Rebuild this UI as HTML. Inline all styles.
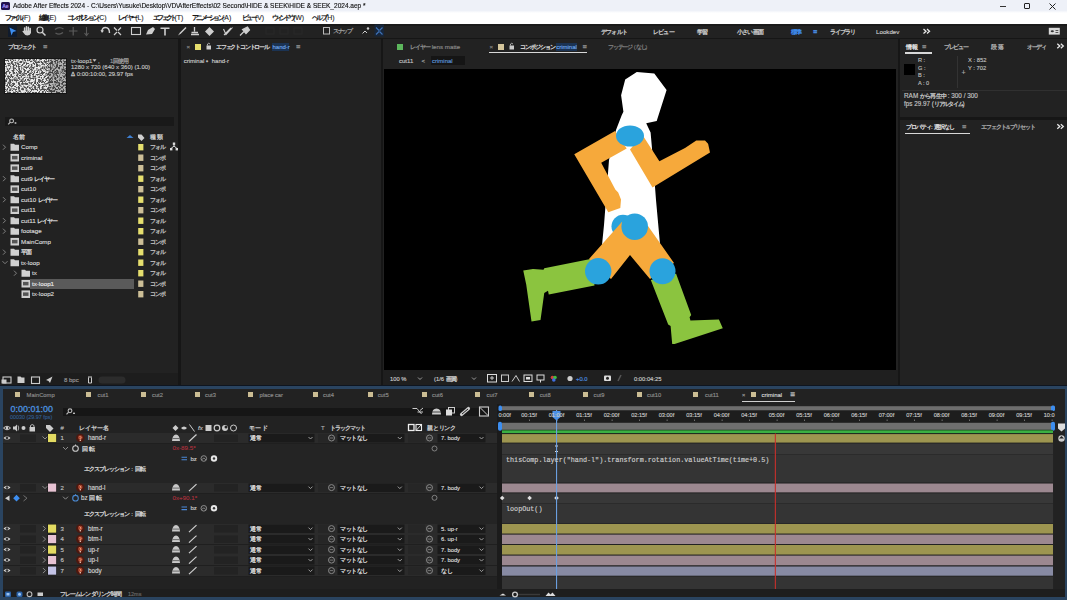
<!DOCTYPE html>
<html><head><meta charset="utf-8"><style>
*{margin:0;padding:0;box-sizing:border-box}
html,body{width:1067px;height:600px;overflow:hidden;background:#161616;font-family:"Liberation Sans",sans-serif;color:#bdbdbd}
.a{position:absolute}
.t{position:absolute;white-space:nowrap;line-height:10px;font-family:"Liberation Sans",sans-serif;-webkit-text-stroke:0.15px currentColor}
.t i{display:inline-block;font-style:normal;overflow:visible;text-align:left;-webkit-text-stroke:0.3px currentColor}
svg{position:absolute;overflow:visible}
</style></head><body>
<div class="a" style="left:0px;top:0px;width:1067px;height:24px;background:#ffffff;"></div>
<div class="a" style="left:0;top:0;width:1067px;height:13px;background:linear-gradient(#eef1f8 0,#eef1f8 10.5px,#ffffff 13px)"></div>
<div class="a" style="left:1px;top:2px;width:9px;height:8px;background:#1e0f4e;border-radius:1.5px"></div>
<div class="t" style="left:2.2px;top:1px;font-size:5px;color:#a997ff;font-weight:bold;line-height:10px">Ae</div>
<div class="t" style="left:13px;top:1px;font-size:7.6px;color:#111;line-height:10px;-webkit-text-stroke:0.15px #111;transform:scaleX(0.86);transform-origin:left">Adobe After Effects 2024 - C:\Users\Yusuke\Desktop\VD\AfterEffects\02 Second\HIDE &amp; SEEK\HIDE &amp; SEEK_2024.aep *</div>
<div class="a" style="left:1000px;top:6px;width:6px;height:0.8px;background:#333;"></div>
<div class="a" style="left:1024px;top:3px;width:6px;height:6px;border:1.2px solid #222;border-radius:1px"></div>
<svg style="left:1049px;top:3px" width="7" height="7"><path d="M0.5 0.5L6.5 6.5M6.5 0.5L0.5 6.5" stroke="#222" stroke-width="1"/></svg>
<div class="t" style="left:4.5px;top:13.3px;font-size:6.9px;color:#1a1a1a;-webkit-text-stroke:0.1px #222"><i style="width:4.3px">フ</i><i style="width:4.3px">ァ</i><i style="width:4.3px">イ</i><i style="width:4.3px">ル</i>(F)</div>
<div class="t" style="left:38.5px;top:13.3px;font-size:6.9px;color:#1a1a1a;-webkit-text-stroke:0.1px #222"><i style="width:4.3px">編</i><i style="width:4.3px">集</i>(E)</div>
<div class="t" style="left:67px;top:13.3px;font-size:6.9px;color:#1a1a1a;-webkit-text-stroke:0.1px #222"><i style="width:4.3px">コ</i><i style="width:4.3px">ン</i><i style="width:4.3px">ポ</i><i style="width:4.3px">ジ</i><i style="width:4.3px">シ</i><i style="width:4.3px">ョ</i><i style="width:4.3px">ン</i>(C)</div>
<div class="t" style="left:118px;top:13.3px;font-size:6.9px;color:#1a1a1a;-webkit-text-stroke:0.1px #222"><i style="width:4.3px">レ</i><i style="width:4.3px">イ</i><i style="width:4.3px">ヤ</i><i style="width:4.3px">ー</i>(L)</div>
<div class="t" style="left:153px;top:13.3px;font-size:6.9px;color:#1a1a1a;-webkit-text-stroke:0.1px #222"><i style="width:4.3px">エ</i><i style="width:4.3px">フ</i><i style="width:4.3px">ェ</i><i style="width:4.3px">ク</i><i style="width:4.3px">ト</i>(T)</div>
<div class="t" style="left:192px;top:13.3px;font-size:6.9px;color:#1a1a1a;-webkit-text-stroke:0.1px #222"><i style="width:4.3px">ア</i><i style="width:4.3px">ニ</i><i style="width:4.3px">メ</i><i style="width:4.3px">ー</i><i style="width:4.3px">シ</i><i style="width:4.3px">ョ</i><i style="width:4.3px">ン</i>(A)</div>
<div class="t" style="left:242px;top:13.3px;font-size:6.9px;color:#1a1a1a;-webkit-text-stroke:0.1px #222"><i style="width:4.3px">ビ</i><i style="width:4.3px">ュ</i><i style="width:4.3px">ー</i>(V)</div>
<div class="t" style="left:271.5px;top:13.3px;font-size:6.9px;color:#1a1a1a;-webkit-text-stroke:0.1px #222"><i style="width:4.3px">ウ</i><i style="width:4.3px">ィ</i><i style="width:4.3px">ン</i><i style="width:4.3px">ド</i><i style="width:4.3px">ウ</i>(W)</div>
<div class="t" style="left:312px;top:13.3px;font-size:6.9px;color:#1a1a1a;-webkit-text-stroke:0.1px #222"><i style="width:4.3px">ヘ</i><i style="width:4.3px">ル</i><i style="width:4.3px">プ</i>(H)</div>
<div class="a" style="left:0px;top:24px;width:1067px;height:13.5px;background:#222222;"></div>
<div class="a" style="left:0px;top:24px;width:1067px;height:1.5px;background:#1a1a1a;"></div>
<div class="a" style="left:7.5px;top:25px;width:9.5px;height:12px;background:#101b2c;"></div>
<svg style="left:0;top:0" width="1067" height="40"><path d="M9.5 27.5L16.5 31L13 32L11.5 35.5Z" fill="#3d8ef0"/><path d="M24.6 28V31.5M26.5 26.8V31M28.4 27.2V31M30.2 28.4V31.8" stroke="#cfcfcf" stroke-width="1.5" stroke-linecap="round"/><path d="M23.8 30.5H31V33Q30 35.5 27.2 35.5Q25 35.5 24 33.5L22.3 31.3Q22.8 30.3 24 31Z" fill="#cfcfcf"/><circle cx="40" cy="30" r="3" fill="none" stroke="#cfcfcf" stroke-width="1.2"/><path d="M42.2 32.2L45.5 35.5" stroke="#cfcfcf" stroke-width="1.5"/><path d="M55 29.5Q59 26 63.5 29M55.5 33Q59.5 35.5 63 32.5" stroke="#5a5a5a" stroke-width="1.3" fill="none"/><path d="M69 31H77.5M73.2 27V35.5" stroke="#5a5a5a" stroke-width="1.2"/><path d="M86.5 27V34.5M84.5 33L86.5 35.5L88.5 33" stroke="#5a5a5a" stroke-width="1.1" fill="none"/><path d="M102 31.5Q102 27.5 105.5 27.5Q109.5 27.5 109.5 33" stroke="#cfcfcf" stroke-width="1.4" fill="none"/><path d="M100.5 30L102 33L104 30.5Z" fill="#cfcfcf"/><path d="M114 27.5L117 30.5M121 27.5L118 30.5M114 35L117 32M121 35L118 32" stroke="#cfcfcf" stroke-width="1.2"/><rect x="131.5" y="27.5" width="9" height="7" fill="none" stroke="#cfcfcf" stroke-width="1.1"/><path d="M146 34.5L148 30L153 27L155 29L152 34Z" fill="#cfcfcf"/><path d="M160.5 27.5H169.5V29H165.8V35.5H164.2V29H160.5Z" fill="#cfcfcf"/><path d="M178 35.5L180 32.5L185.5 27L186.5 28L181 33.5Z" fill="#cfcfcf"/><path d="M194.5 27V31.5M191.5 32.5H198M191 34.5H199" stroke="#cfcfcf" stroke-width="1.3"/><path d="M205 31.5L209.5 27L214 31.5L209.5 36Z" fill="#cfcfcf"/><path d="M223.5 29L226 34.5L232.5 27.5M224 35L231 28" stroke="#cfcfcf" stroke-width="1.1" fill="none"/><path d="M240 35.5L244 31.5M242.5 29.5L247.5 27L249.5 30L246 33.5Z" stroke="#cfcfcf" stroke-width="1.2" fill="#cfcfcf"/><rect x="266" y="28" width="8" height="6" fill="none" stroke="#282828"/><rect x="280" y="28" width="8" height="6" fill="none" stroke="#282828"/><rect x="294" y="28" width="8" height="6" fill="none" stroke="#282828"/><rect x="323.5" y="27.5" width="6" height="6.5" fill="none" stroke="#bbb" stroke-width="1"/><circle cx="368" cy="28.5" r="1.2" fill="#cfcfcf"/><path d="M362.5 33.5L365 31L367 33" stroke="#cfcfcf" stroke-width="1" fill="none"/><rect x="374.5" y="24.5" width="9.5" height="12" fill="#17263b"/><path d="M376 27.5L379 30.5M382.5 27.5L379.5 30.5M376 34.5L379 31.5M382.5 34.5L379.5 31.5" stroke="#3f73b8" stroke-width="1.1"/></svg>
<div class="t" style="left:333px;top:26.0px;font-size:6px;color:#9a9a9a;"><i style="width:4.6px">ス</i><i style="width:4.6px">ナ</i><i style="width:4.6px">ッ</i><i style="width:4.6px">プ</i></div>
<div class="t" style="left:601px;top:26.5px;font-size:6.2px;color:#c8c8c8;"><i style="width:5.2px">デ</i><i style="width:5.2px">フ</i><i style="width:5.2px">ォ</i><i style="width:5.2px">ル</i><i style="width:5.2px">ト</i></div>
<div class="t" style="left:653px;top:26.5px;font-size:6.2px;color:#c8c8c8;"><i style="width:5.2px">レ</i><i style="width:5.2px">ビ</i><i style="width:5.2px">ュ</i><i style="width:5.2px">ー</i></div>
<div class="t" style="left:697px;top:26.5px;font-size:6.2px;color:#c8c8c8;"><i style="width:5.2px">学</i><i style="width:5.2px">習</i></div>
<div class="t" style="left:737px;top:26.5px;font-size:6.2px;color:#c8c8c8;"><i style="width:5.2px">小</i><i style="width:5.2px">さ</i><i style="width:5.2px">い</i><i style="width:5.2px">画</i><i style="width:5.2px">面</i></div>
<div class="t" style="left:791px;top:26.5px;font-size:6.2px;color:#3f8ef2;"><i style="width:5.2px">標</i><i style="width:5.2px">準</i></div>
<div class="t" style="left:829.5px;top:26.5px;font-size:6.2px;color:#c8c8c8;"><i style="width:5.2px">ラ</i><i style="width:5.2px">イ</i><i style="width:5.2px">ブ</i><i style="width:5.2px">ラ</i><i style="width:5.2px">リ</i></div>
<div class="t" style="left:876px;top:26.5px;font-size:6.2px;color:#c8c8c8;">Lookdev</div>
<div class="t" style="left:813px;top:26.5px;font-size:7px;color:#4b8fe6;"><i style="width:4.760000000000001px">≡</i></div>
<svg style="left:0;top:0" width="1067" height="140"><rect x="1048.8" y="27.8" width="11" height="6.8" fill="#d8d8d8"/><ellipse cx="1052.3" cy="31.2" rx="1.6" ry="1" fill="#333"/><rect x="1055.5" y="30" width="2.8" height="0.9" fill="#444"/><rect x="1055.5" y="32" width="2.8" height="0.9" fill="#444"/><path d="M923.5 29L926 31.2L923.5 33.4M927 29L929.5 31.2L927 33.4" stroke="#e8e8e8" stroke-width="1.3" fill="none"/></svg>
<div class="a" style="left:0px;top:39px;width:178px;height:346px;background:#222222;"></div>
<div class="a" style="left:181px;top:39px;width:200px;height:346px;background:#222222;"></div>
<div class="a" style="left:383px;top:39px;width:515px;height:346px;background:#222222;"></div>
<div class="a" style="left:900px;top:39px;width:167px;height:78px;background:#222222;"></div>
<div class="a" style="left:900px;top:120px;width:167px;height:265px;background:#222222;"></div>
<div class="t" style="left:8px;top:41.5px;font-size:6.4px;color:#c9c9c9;"><i style="width:4.7px">プ</i><i style="width:4.7px">ロ</i><i style="width:4.7px">ジ</i><i style="width:4.7px">ェ</i><i style="width:4.7px">ク</i><i style="width:4.7px">ト</i></div>
<div class="t" style="left:43px;top:41.5px;font-size:7px;color:#8a8a8a;"><i style="width:4.760000000000001px">≡</i></div>
<svg style="left:4px;top:57.5px" width="63" height="36"><defs><filter id="nz" x="0" y="0" width="100%" height="100%"><feTurbulence type="fractalNoise" baseFrequency="0.55" numOctaves="3" seed="7"/><feColorMatrix type="matrix" values="0 0 0 0 0.08  0 0 0 0 0.08  0 0 0 0 0.08  3.6 3.6 3.6 0 -4.95"/><feComposite in2="SourceGraphic" operator="in"/></filter></defs><rect width="63" height="36" fill="#eaeaea"/><rect width="63" height="36" fill="#3a3a3a" filter="url(#nz)"/><rect x="44" y="0" width="19" height="36" fill="rgba(20,20,20,0.25)"/><rect x="0.5" y="0.5" width="62" height="35" fill="none" stroke="#151515" stroke-width="1"/></svg>
<div class="t" style="left:71px;top:55.5px;font-size:6px;color:#c4c4c4;">tx-loop1</div>
<div class="t" style="left:98px;top:55.5px;font-size:6px;color:#c4c4c4;">,</div>
<div class="t" style="left:110px;top:55.5px;font-size:6px;color:#9a9a9a;">1<i style="width:4.6px">回</i><i style="width:4.6px">使</i><i style="width:4.6px">用</i></div>
<svg style="left:0;top:0" width="120" height="70"><path d="M92.5 59.3H96.5L94.5 61.8Z" fill="#c4c4c4"/></svg>
<div class="t" style="left:71px;top:62.2px;font-size:6px;color:#c4c4c4;">1280 x 720  (640 x 360) (1.00)</div>
<div class="t" style="left:71px;top:68.8px;font-size:6px;color:#c4c4c4;"><i style="width:4.08px">Δ</i> 0:00:10:00, 29.97 fps</div>
<div class="a" style="left:5px;top:116.7px;width:169px;height:9.8px;background:#191919;"></div>
<svg style="left:0;top:0" width="180" height="300"><circle cx="11.6" cy="120.9" r="1.9" fill="none" stroke="#bbb" stroke-width="1.1"/><path d="M10.2 122.3L8.2 124.3" stroke="#bbb" stroke-width="1.2"/><ellipse cx="15.5" cy="123" rx="1.1" ry="0.8" fill="#ddd"/><path d="M126.5 138L130 135L133.5 138Z" fill="#3f7fd0"/><path d="M138 134.5L141.5 134.5L144.5 138L141.5 141L138 137.5Z" fill="#cfcfcf"/></svg>
<div class="t" style="left:13px;top:131.5px;font-size:6.4px;color:#c8c8c8;"><i style="width:6px">名</i><i style="width:6px">前</i></div>
<div class="t" style="left:150px;top:131.5px;font-size:6.4px;color:#c8c8c8;"><i style="width:7px">種</i><i style="width:7px">類</i></div>
<div class="t" style="left:21px;top:142.4px;font-size:6.2px;color:#d8d8d8;">Comp</div>
<div class="t" style="left:150px;top:142.4px;font-size:6.2px;color:#bdbdbd;"><i style="width:5.2px">フ</i><i style="width:5.2px">ォ</i><i style="width:5.2px">ル</i></div>
<div class="t" style="left:21px;top:152.9px;font-size:6.2px;color:#d8d8d8;">criminal</div>
<div class="t" style="left:150px;top:152.9px;font-size:6.2px;color:#bdbdbd;"><i style="width:5.2px">コ</i><i style="width:5.2px">ン</i><i style="width:5.2px">ポ</i></div>
<div class="t" style="left:21px;top:163.4px;font-size:6.2px;color:#d8d8d8;">cut9</div>
<div class="t" style="left:150px;top:163.4px;font-size:6.2px;color:#bdbdbd;"><i style="width:5.2px">コ</i><i style="width:5.2px">ン</i><i style="width:5.2px">ポ</i></div>
<div class="t" style="left:21px;top:173.9px;font-size:6.2px;color:#d8d8d8;">cut9 <i style="width:4.8px">レ</i><i style="width:4.8px">イ</i><i style="width:4.8px">ヤ</i><i style="width:4.8px">ー</i></div>
<div class="t" style="left:150px;top:173.9px;font-size:6.2px;color:#bdbdbd;"><i style="width:5.2px">フ</i><i style="width:5.2px">ォ</i><i style="width:5.2px">ル</i></div>
<div class="t" style="left:21px;top:184.4px;font-size:6.2px;color:#d8d8d8;">cut10</div>
<div class="t" style="left:150px;top:184.4px;font-size:6.2px;color:#bdbdbd;"><i style="width:5.2px">コ</i><i style="width:5.2px">ン</i><i style="width:5.2px">ポ</i></div>
<div class="t" style="left:21px;top:194.9px;font-size:6.2px;color:#d8d8d8;">cut10 <i style="width:4.8px">レ</i><i style="width:4.8px">イ</i><i style="width:4.8px">ヤ</i><i style="width:4.8px">ー</i></div>
<div class="t" style="left:150px;top:194.9px;font-size:6.2px;color:#bdbdbd;"><i style="width:5.2px">フ</i><i style="width:5.2px">ォ</i><i style="width:5.2px">ル</i></div>
<div class="t" style="left:21px;top:205.4px;font-size:6.2px;color:#d8d8d8;">cut11</div>
<div class="t" style="left:150px;top:205.4px;font-size:6.2px;color:#bdbdbd;"><i style="width:5.2px">コ</i><i style="width:5.2px">ン</i><i style="width:5.2px">ポ</i></div>
<div class="t" style="left:21px;top:215.9px;font-size:6.2px;color:#d8d8d8;">cut11 <i style="width:4.8px">レ</i><i style="width:4.8px">イ</i><i style="width:4.8px">ヤ</i><i style="width:4.8px">ー</i></div>
<div class="t" style="left:150px;top:215.9px;font-size:6.2px;color:#bdbdbd;"><i style="width:5.2px">フ</i><i style="width:5.2px">ォ</i><i style="width:5.2px">ル</i></div>
<div class="t" style="left:21px;top:226.4px;font-size:6.2px;color:#d8d8d8;">footage</div>
<div class="t" style="left:150px;top:226.4px;font-size:6.2px;color:#bdbdbd;"><i style="width:5.2px">フ</i><i style="width:5.2px">ォ</i><i style="width:5.2px">ル</i></div>
<div class="t" style="left:21px;top:236.9px;font-size:6.2px;color:#d8d8d8;">MainComp</div>
<div class="t" style="left:150px;top:236.9px;font-size:6.2px;color:#bdbdbd;"><i style="width:5.2px">コ</i><i style="width:5.2px">ン</i><i style="width:5.2px">ポ</i></div>
<div class="t" style="left:21px;top:247.4px;font-size:6.2px;color:#d8d8d8;"><i style="width:4.8px">平</i><i style="width:4.8px">面</i></div>
<div class="t" style="left:150px;top:247.4px;font-size:6.2px;color:#bdbdbd;"><i style="width:5.2px">フ</i><i style="width:5.2px">ォ</i><i style="width:5.2px">ル</i></div>
<div class="t" style="left:21px;top:257.9px;font-size:6.2px;color:#d8d8d8;">tx-loop</div>
<div class="t" style="left:150px;top:257.9px;font-size:6.2px;color:#bdbdbd;"><i style="width:5.2px">フ</i><i style="width:5.2px">ォ</i><i style="width:5.2px">ル</i></div>
<div class="t" style="left:32px;top:268.4px;font-size:6.2px;color:#d8d8d8;">tx</div>
<div class="t" style="left:150px;top:268.4px;font-size:6.2px;color:#bdbdbd;"><i style="width:5.2px">フ</i><i style="width:5.2px">ォ</i><i style="width:5.2px">ル</i></div>
<div class="a" style="left:30px;top:278.5px;width:104px;height:10px;background:#5a5a5a;"></div>
<div class="t" style="left:32px;top:278.9px;font-size:6.2px;color:#e8e8e8;">tx-loop1</div>
<div class="t" style="left:150px;top:278.9px;font-size:6.2px;color:#bdbdbd;"><i style="width:5.2px">コ</i><i style="width:5.2px">ン</i><i style="width:5.2px">ポ</i></div>
<div class="t" style="left:32px;top:289.4px;font-size:6.2px;color:#d8d8d8;">tx-loop2</div>
<div class="t" style="left:150px;top:289.4px;font-size:6.2px;color:#bdbdbd;"><i style="width:5.2px">コ</i><i style="width:5.2px">ン</i><i style="width:5.2px">ポ</i></div>
<svg style="left:0;top:0" width="180" height="310"><path d="M3 144.7L5.5 147.2L3 149.7" stroke="#8a8a8a" stroke-width="0.9" fill="none"/><path d="M10.5 143.7H14L15 144.7H19V150.7H10.5Z" fill="#d0d0d0"/><rect x="138.2" y="144.0" width="5.2" height="6.4" fill="#e6df6e"/><rect x="10.5" y="153.89999999999998" width="8.5" height="7.6" fill="#cfcfcf"/><rect x="12" y="155.89999999999998" width="5.5" height="3.5" fill="#555"/><rect x="138.2" y="154.5" width="5.2" height="6.4" fill="#cdbf97"/><rect x="10.5" y="164.39999999999998" width="8.5" height="7.6" fill="#cfcfcf"/><rect x="12" y="166.39999999999998" width="5.5" height="3.5" fill="#555"/><rect x="138.2" y="165.0" width="5.2" height="6.4" fill="#cdbf97"/><path d="M3 176.2L5.5 178.7L3 181.2" stroke="#8a8a8a" stroke-width="0.9" fill="none"/><path d="M10.5 175.2H14L15 176.2H19V182.2H10.5Z" fill="#d0d0d0"/><rect x="138.2" y="175.5" width="5.2" height="6.4" fill="#e6df6e"/><rect x="10.5" y="185.39999999999998" width="8.5" height="7.6" fill="#cfcfcf"/><rect x="12" y="187.39999999999998" width="5.5" height="3.5" fill="#555"/><rect x="138.2" y="186.0" width="5.2" height="6.4" fill="#cdbf97"/><path d="M3 197.2L5.5 199.7L3 202.2" stroke="#8a8a8a" stroke-width="0.9" fill="none"/><path d="M10.5 196.2H14L15 197.2H19V203.2H10.5Z" fill="#d0d0d0"/><rect x="138.2" y="196.5" width="5.2" height="6.4" fill="#e6df6e"/><rect x="10.5" y="206.39999999999998" width="8.5" height="7.6" fill="#cfcfcf"/><rect x="12" y="208.39999999999998" width="5.5" height="3.5" fill="#555"/><rect x="138.2" y="207.0" width="5.2" height="6.4" fill="#cdbf97"/><path d="M3 218.2L5.5 220.7L3 223.2" stroke="#8a8a8a" stroke-width="0.9" fill="none"/><path d="M10.5 217.2H14L15 218.2H19V224.2H10.5Z" fill="#d0d0d0"/><rect x="138.2" y="217.5" width="5.2" height="6.4" fill="#e6df6e"/><path d="M3 228.7L5.5 231.2L3 233.7" stroke="#8a8a8a" stroke-width="0.9" fill="none"/><path d="M10.5 227.7H14L15 228.7H19V234.7H10.5Z" fill="#d0d0d0"/><rect x="138.2" y="228.0" width="5.2" height="6.4" fill="#e6df6e"/><rect x="10.5" y="237.89999999999998" width="8.5" height="7.6" fill="#cfcfcf"/><rect x="12" y="239.89999999999998" width="5.5" height="3.5" fill="#555"/><rect x="138.2" y="238.5" width="5.2" height="6.4" fill="#cdbf97"/><path d="M3 249.7L5.5 252.2L3 254.7" stroke="#8a8a8a" stroke-width="0.9" fill="none"/><path d="M10.5 248.7H14L15 249.7H19V255.7H10.5Z" fill="#d0d0d0"/><rect x="138.2" y="249.0" width="5.2" height="6.4" fill="#e6df6e"/><path d="M2.5 261.2L5 263.7L7.5 261.2" stroke="#8a8a8a" stroke-width="0.9" fill="none"/><path d="M10.5 259.2H14L15 260.2H19V266.2H10.5Z" fill="#d0d0d0"/><rect x="138.2" y="259.5" width="5.2" height="6.4" fill="#e6df6e"/><path d="M14 270.7L16.5 273.2L14 275.7" stroke="#8a8a8a" stroke-width="0.9" fill="none"/><path d="M21.5 269.7H25L26 270.7H30V276.7H21.5Z" fill="#d0d0d0"/><rect x="138.2" y="270.0" width="5.2" height="6.4" fill="#e6df6e"/><rect x="21.5" y="279.9" width="8.5" height="7.6" fill="#cfcfcf"/><rect x="23" y="281.9" width="5.5" height="3.5" fill="#555"/><rect x="138.2" y="280.5" width="5.2" height="6.4" fill="#cdbf97"/><rect x="21.5" y="290.4" width="8.5" height="7.6" fill="#cfcfcf"/><rect x="23" y="292.4" width="5.5" height="3.5" fill="#555"/><rect x="138.2" y="291.0" width="5.2" height="6.4" fill="#cdbf97"/><path d="M174 143.5V146M171 148.5L174 146L177 148.5" stroke="#ddd" stroke-width="1" fill="none"/><rect x="172.8" y="142.5" width="2.4" height="2.4" fill="#ddd"/><rect x="170" y="148" width="2.4" height="2.4" fill="#ddd"/><rect x="175.6" y="148" width="2.4" height="2.4" fill="#ddd"/></svg>
<div class="a" style="left:0px;top:373px;width:178px;height:12px;background:#1d1d1d;"></div>
<svg style="left:0;top:0" width="180" height="390"><rect x="3" y="377" width="8" height="6" fill="none" stroke="#ccc" stroke-width="1.1"/><rect x="1.5" y="379.5" width="5" height="4" fill="#ccc"/><path d="M17.5 376.5H20.5L21.5 377.5H24.5V383H17.5Z" fill="#ccc"/><rect x="31.5" y="377" width="8" height="6.5" fill="none" stroke="#ccc" stroke-width="1.1"/><path d="M46 380L52.5 376.5L50 383L48.5 381Z" fill="#ccc"/><path d="M88 377H92M88.5 377.5V383H91.5V377.5" stroke="#ccc" stroke-width="1" fill="none"/><rect x="98.5" y="376.5" width="27" height="7" rx="3.5" fill="#2c2c2c"/></svg>
<div class="t" style="left:64px;top:375.0px;font-size:6px;color:#9a9a9a;">8 bpc</div>
<div class="t" style="left:186.5px;top:41.8px;font-size:6px;color:#777;"><i style="width:4.08px">×</i></div>
<div class="a" style="left:194.6px;top:43.5px;width:6px;height:6px;background:#e6de6c;"></div>
<svg style="left:0;top:0" width="600" height="70"><rect x="206.5" y="45.5" width="4.5" height="4" fill="#ccc"/><path d="M207.5 45.5V44Q208.7 42.5 210 44" stroke="#ccc" stroke-width="0.8" fill="none"/><rect x="509.5" y="45.5" width="4.5" height="4" fill="#ccc"/><path d="M510.5 45.5V44Q511.7 42.5 513 44" stroke="#ccc" stroke-width="0.8" fill="none"/></svg>
<div class="t" style="left:216px;top:41.8px;font-size:6.2px;color:#d0d0d0;"><i style="width:4.8px">エ</i><i style="width:4.8px">フ</i><i style="width:4.8px">ェ</i><i style="width:4.8px">ク</i><i style="width:4.8px">ト</i><i style="width:4.8px">コ</i><i style="width:4.8px">ン</i><i style="width:4.8px">ト</i><i style="width:4.8px">ロ</i><i style="width:4.8px">ー</i><i style="width:4.8px">ル</i></div>
<div class="a" style="left:271.5px;top:43px;width:17.5px;height:7.5px;background:#1b3353;"></div>
<div class="t" style="left:272.5px;top:41.8px;font-size:6px;color:#6fa6e8;">hand-r</div>
<div class="t" style="left:296px;top:41.8px;font-size:7px;color:#8a8a8a;"><i style="width:4.760000000000001px">≡</i></div>
<div class="t" style="left:183.7px;top:55.6px;font-size:6px;color:#c8c8c8;">criminal <i style="width:4.08px">•</i> hand-r</div>
<div class="a" style="left:396.6px;top:43.5px;width:6.5px;height:6.2px;background:#5cb65c;"></div>
<div class="t" style="left:410px;top:41.8px;font-size:6.2px;color:#8c8c8c;"><i style="width:5px">レ</i><i style="width:5px">イ</i><i style="width:5px">ヤ</i><i style="width:5px">ー</i> lens matte</div>
<div class="t" style="left:489.5px;top:41.8px;font-size:6px;color:#777;"><i style="width:4.08px">×</i></div>
<div class="a" style="left:497.5px;top:43.5px;width:6.3px;height:6.2px;background:#d4c59b;"></div>
<div class="t" style="left:519.5px;top:41.8px;font-size:6.2px;color:#d8d8d8;"><i style="width:5.1px">コ</i><i style="width:5.1px">ン</i><i style="width:5.1px">ポ</i><i style="width:5.1px">ジ</i><i style="width:5.1px">シ</i><i style="width:5.1px">ョ</i><i style="width:5.1px">ン</i></div>
<div class="a" style="left:555.5px;top:43px;width:21.5px;height:7.5px;background:#1b3353;"></div>
<div class="t" style="left:556.2px;top:41.8px;font-size:6px;color:#6fa6e8;">criminal</div>
<div class="t" style="left:582.5px;top:41.8px;font-size:7px;color:#8a8a8a;"><i style="width:4.760000000000001px">≡</i></div>
<div class="a" style="left:488.7px;top:52px;width:98.5px;height:1.3px;background:#d8d8d8;"></div>
<div class="t" style="left:608px;top:41.8px;font-size:6.2px;color:#7d7d7d;"><i style="width:4.8px">フ</i><i style="width:4.8px">ッ</i><i style="width:4.8px">テ</i><i style="width:4.8px">ー</i><i style="width:4.8px">ジ</i> (<i style="width:4.8px">な</i><i style="width:4.8px">し</i>)</div>
<div class="t" style="left:399px;top:55.5px;font-size:6px;color:#c0c0c0;">cut11</div>
<div class="t" style="left:421.5px;top:55.5px;font-size:6px;color:#aaa;">&lt;</div>
<div class="a" style="left:430.5px;top:56.3px;width:34.5px;height:8.5px;background:#151515;"></div>
<div class="t" style="left:432px;top:55.5px;font-size:6px;color:#5d95d8;">criminal</div>
<div class="a" style="left:384px;top:69px;width:512px;height:301px;background:#000000;"></div>
<div class="a" style="left:383px;top:370px;width:515px;height:15px;background:#1f1f1f;"></div>
<div class="t" style="left:390px;top:373.5px;font-size:5.8px;color:#c8c8c8;">100 %</div>
<div class="t" style="left:470px;top:373.5px;font-size:6px;color:#bdbdbd;"></div>
<svg style="left:0;top:0" width="700" height="390"><path d="M418 377.5L420 379.5L422 377.5M472 377.5L474 379.5L476 377.5" stroke="#aaa" stroke-width="0.9" fill="none"/><rect x="487.5" y="374.5" width="9" height="7.5" fill="none" stroke="#ddd" stroke-width="1"/><path d="M490 378H494M492 376V380" stroke="#ddd" stroke-width="0.9"/><rect x="501.5" y="375" width="7" height="6.5" fill="none" stroke="#ccc" stroke-width="1"/><path d="M512 381.5L516 375.5L519.5 381.5" stroke="#ccc" stroke-width="1" fill="none"/><rect x="524" y="375" width="8" height="6.5" fill="none" stroke="#ddd" stroke-width="1"/><rect x="526" y="377" width="4" height="2.5" fill="#ddd"/><rect x="537" y="375" width="7" height="5" fill="none" stroke="#ddd" stroke-width="1"/><path d="M540.5 380V382.5" stroke="#ddd"/><circle cx="552.5" cy="377.5" r="1.8" fill="#d43f3f"/><circle cx="555" cy="377.5" r="1.8" fill="#3fbf3f"/><circle cx="553.8" cy="380" r="1.8" fill="#3f6fdf"/><circle cx="570" cy="378.5" r="2.6" fill="#ccc"/><rect x="604" y="375.5" width="7" height="5.5" rx="1" fill="#ddd"/><circle cx="607.5" cy="378.3" r="1.5" fill="#222"/><path d="M618 381L621 375" stroke="#555" stroke-width="1.5"/></svg>
<div class="t" style="left:434px;top:373.5px;font-size:5.8px;color:#c8c8c8;">(1/6 <i style="width:5px">画</i><i style="width:5px">質</i>)</div>
<div class="t" style="left:576px;top:373.5px;font-size:5.8px;color:#4d8fe0;">+0.0</div>
<div class="t" style="left:634px;top:373.5px;font-size:5.8px;color:#c8c8c8;">0:00:04:25</div>
<div class="t" style="left:906px;top:41.8px;font-size:6.2px;color:#e0e0e0;"><i style="width:5.5px">情</i><i style="width:5.5px">報</i></div>
<svg style="left:0;top:0" width="1067" height="140"><path d="M1057.3 43.8L1059.8 46L1057.3 48.2M1060.8 43.8L1063.3 46L1060.8 48.2" stroke="#e8e8e8" stroke-width="1.3" fill="none"/><path d="M1057.3 124.3L1059.8 126.5L1057.3 128.7M1060.8 124.3L1063.3 126.5L1060.8 128.7" stroke="#e8e8e8" stroke-width="1.3" fill="none"/></svg>
<div class="t" style="left:922px;top:41.8px;font-size:7px;color:#8a8a8a;"><i style="width:4.760000000000001px">≡</i></div>
<div class="a" style="left:905px;top:52.4px;width:26.5px;height:1.3px;background:#d8d8d8;"></div>
<div class="t" style="left:944px;top:41.8px;font-size:6.2px;color:#b0b0b0;"><i style="width:4.7px">プ</i><i style="width:4.7px">レ</i><i style="width:4.7px">ビ</i><i style="width:4.7px">ュ</i><i style="width:4.7px">ー</i></div>
<div class="t" style="left:991px;top:41.8px;font-size:6.2px;color:#b0b0b0;"><i style="width:6.5px">段</i><i style="width:6.5px">落</i></div>
<div class="t" style="left:1027px;top:41.8px;font-size:6.2px;color:#b0b0b0;"><i style="width:4.7px">オ</i><i style="width:4.7px">ー</i><i style="width:4.7px">デ</i><i style="width:4.7px">ィ</i></div>
<div class="a" style="left:904px;top:64px;width:11px;height:11px;background:#000;"></div>
<div class="t" style="left:918px;top:55.0px;font-size:5.6px;color:#bdbdbd;">R :</div>
<div class="t" style="left:918px;top:62.5px;font-size:5.6px;color:#bdbdbd;">G :</div>
<div class="t" style="left:918px;top:70.0px;font-size:5.6px;color:#bdbdbd;">B :</div>
<div class="t" style="left:918px;top:77.5px;font-size:5.6px;color:#bdbdbd;">A :  0</div>
<div class="a" style="left:957px;top:56px;width:0.8px;height:32px;background:#333;"></div>
<div class="t" style="left:968px;top:55.0px;font-size:5.8px;color:#bdbdbd;">X : 852</div>
<div class="t" style="left:968px;top:63.0px;font-size:5.8px;color:#bdbdbd;">Y : 702</div>
<div class="t" style="left:961.5px;top:67.5px;font-size:7px;color:#aaa;">+</div>
<div class="a" style="left:902px;top:89.5px;width:165px;height:0.8px;background:#303030;"></div>
<div class="t" style="left:904px;top:90.9px;font-size:6.4px;color:#c4c4c4;">RAM <i style="width:5.2px">か</i><i style="width:5.2px">ら</i><i style="width:5.2px">再</i><i style="width:5.2px">生</i><i style="width:5.2px">中</i> : 300 / 300</div>
<div class="t" style="left:904px;top:98.5px;font-size:6.3px;color:#c4c4c4;">fps 29.97 (<i style="width:4.8px">リ</i><i style="width:4.8px">ア</i><i style="width:4.8px">ル</i><i style="width:4.8px">タ</i><i style="width:4.8px">イ</i><i style="width:4.8px">ム</i>)</div>
<div class="t" style="left:906px;top:122.3px;font-size:6.2px;color:#d8d8d8;"><i style="width:5px">プ</i><i style="width:5px">ロ</i><i style="width:5px">パ</i><i style="width:5px">テ</i><i style="width:5px">ィ</i>: <i style="width:5px">選</i><i style="width:5px">択</i><i style="width:5px">な</i><i style="width:5px">し</i></div>
<div class="t" style="left:962px;top:122.3px;font-size:7px;color:#8a8a8a;"><i style="width:4.760000000000001px">≡</i></div>
<div class="a" style="left:905px;top:133.2px;width:65px;height:1.3px;background:#d8d8d8;"></div>
<div class="t" style="left:981px;top:122.3px;font-size:6.2px;color:#a8a8a8;"><i style="width:5px">エ</i><i style="width:5px">フ</i><i style="width:5px">ェ</i><i style="width:5px">ク</i><i style="width:5px">ト</i>&amp;<i style="width:5px">プ</i><i style="width:5px">リ</i><i style="width:5px">セ</i><i style="width:5px">ッ</i><i style="width:5px">ト</i></div>
<div class="a" style="left:0px;top:385px;width:1067px;height:215px;background:#2a4460;"></div>
<div class="a" style="left:0px;top:384.8px;width:1067px;height:1.4px;background:#0e1520;"></div>
<div class="a" style="left:2.5px;top:388.5px;width:1062px;height:208.5px;background:#222222;"></div>
<div class="a" style="left:15px;top:392px;width:5.2px;height:5.2px;background:#cbbd94;"></div>
<div class="t" style="left:26.6px;top:389.8px;font-size:5.8px;color:#8d8d8d;">MainComp</div>
<div class="a" style="left:86px;top:392px;width:5.2px;height:5.2px;background:#cbbd94;"></div>
<div class="t" style="left:97.5px;top:389.8px;font-size:5.8px;color:#8d8d8d;">cut1</div>
<div class="a" style="left:140.5px;top:392px;width:5.2px;height:5.2px;background:#cbbd94;"></div>
<div class="t" style="left:152px;top:389.8px;font-size:5.8px;color:#8d8d8d;">cut2</div>
<div class="a" style="left:195px;top:392px;width:5.2px;height:5.2px;background:#cbbd94;"></div>
<div class="t" style="left:205px;top:389.8px;font-size:5.8px;color:#8d8d8d;">cut3</div>
<div class="a" style="left:248px;top:392px;width:5.2px;height:5.2px;background:#cbbd94;"></div>
<div class="t" style="left:259.5px;top:389.8px;font-size:5.8px;color:#8d8d8d;">place car</div>
<div class="a" style="left:313px;top:392px;width:5.2px;height:5.2px;background:#cbbd94;"></div>
<div class="t" style="left:323px;top:389.8px;font-size:5.8px;color:#8d8d8d;">cut4</div>
<div class="a" style="left:367.6px;top:392px;width:5.2px;height:5.2px;background:#cbbd94;"></div>
<div class="t" style="left:377.7px;top:389.8px;font-size:5.8px;color:#8d8d8d;">cut5</div>
<div class="a" style="left:422px;top:392px;width:5.2px;height:5.2px;background:#cbbd94;"></div>
<div class="t" style="left:432px;top:389.8px;font-size:5.8px;color:#8d8d8d;">cut6</div>
<div class="a" style="left:475px;top:392px;width:5.2px;height:5.2px;background:#cbbd94;"></div>
<div class="t" style="left:486.6px;top:389.8px;font-size:5.8px;color:#8d8d8d;">cut7</div>
<div class="a" style="left:529px;top:392px;width:5.2px;height:5.2px;background:#cbbd94;"></div>
<div class="t" style="left:539.7px;top:389.8px;font-size:5.8px;color:#8d8d8d;">cut8</div>
<div class="a" style="left:583px;top:392px;width:5.2px;height:5.2px;background:#cbbd94;"></div>
<div class="t" style="left:593.5px;top:389.8px;font-size:5.8px;color:#8d8d8d;">cut9</div>
<div class="a" style="left:637px;top:392px;width:5.2px;height:5.2px;background:#cbbd94;"></div>
<div class="t" style="left:647px;top:389.8px;font-size:5.8px;color:#8d8d8d;">cut10</div>
<div class="a" style="left:693px;top:392px;width:5.2px;height:5.2px;background:#cbbd94;"></div>
<div class="t" style="left:705px;top:389.8px;font-size:5.8px;color:#8d8d8d;">cut11</div>
<div class="t" style="left:742px;top:389.8px;font-size:5.5px;color:#888;"><i style="width:3.74px">×</i></div>
<div class="a" style="left:751px;top:392px;width:5.2px;height:5.2px;background:#cbbd94;"></div>
<div class="t" style="left:761.5px;top:389.8px;font-size:6px;color:#d8d8d8;">criminal</div>
<div class="t" style="left:790.5px;top:389.8px;font-size:8px;color:#c8c8c8;"><i style="width:5.44px">≡</i></div>
<div class="a" style="left:742px;top:400.5px;width:53px;height:1.2px;background:#d0d0d0;"></div>
<div class="t" style="left:10.5px;top:403.8px;font-size:8.9px;color:#4a8ddc;line-height:10px;letter-spacing:0.05px;-webkit-text-stroke:0.35px #4a8ddc">0:00:01:00</div>
<div class="t" style="left:10px;top:411.8px;font-size:5.4px;color:#2f5a8e;">00030 (29.97 fps)</div>
<div class="a" style="left:63px;top:407.8px;width:427px;height:8.4px;background:#161616;"></div>
<svg style="left:0;top:0" width="1067" height="600"><circle cx="70" cy="410.8" r="1.9" fill="none" stroke="#bbb" stroke-width="1.1"/><path d="M68.6 412.2L66.5 414.3" stroke="#bbb" stroke-width="1.2"/><ellipse cx="74" cy="413.3" rx="1.1" ry="0.8" fill="#ddd"/><path d="M412.5 408.5H417L421.5 414M417.5 412H423M420 410.5L423 408" stroke="#ccc" stroke-width="1" fill="none"/><path d="M432 414.5Q432 408.5 436.5 408.5Q441 408.5 441 414.5Z" fill="#ccc"/><path d="M432 412H441" stroke="#222" stroke-width="0.8"/><rect x="446" y="409.5" width="6" height="6" fill="#ddd"/><rect x="448.5" y="407.5" width="6" height="5.5" fill="none" stroke="#ddd" stroke-width="0.9"/><path d="M461.5 414.5L468.5 408.5" stroke="#ccc" stroke-width="3.2" stroke-linecap="round"/><path d="M462 414L468 409" stroke="#222" stroke-width="1" /><rect x="479.5" y="407" width="9" height="9" fill="none" stroke="#ccc" stroke-width="1.1"/><path d="M480 407.5L488 415.5" stroke="#ccc" stroke-width="1"/></svg>
<svg style="left:0;top:0" width="500" height="600"><path d="M3.5 428Q7 424.5 10.5 428Q7 431.5 3.5 428Z" fill="none" stroke="#ccc" stroke-width="1"/><circle cx="7" cy="428" r="1.3" fill="#ccc"/><path d="M13 426.5H15L17 424.5V431.5L15 429.5H13Z" fill="#ccc"/><path d="M18 425.5Q19.5 428 18 430.5" stroke="#ccc" stroke-width="0.8" fill="none"/><circle cx="23.5" cy="428" r="2" fill="#ccc"/><rect x="29.5" y="427" width="5.5" height="4.5" fill="#ccc"/><path d="M30.5 427V425.5Q32.2 423.5 34 425.5V427" stroke="#ccc" stroke-width="0.9" fill="none"/><path d="M46 425L50 425L53.5 428.5L50 432L46 428Z" fill="#ccc"/><path d="M172.5 428L175.5 425L178.5 428L175.5 431Z" fill="#ccc"/><path d="M181 428Q184 425 187 428Q184 431 181 428Z" fill="#ccc"/><path d="M189.5 424.5L194.5 431.5" stroke="#ccc" stroke-width="1"/><rect x="205.5" y="425" width="6" height="6" fill="#ccc"/><circle cx="217" cy="428" r="2.8" fill="none" stroke="#ccc" stroke-width="1.2"/><circle cx="225" cy="428" r="3" fill="#ccc"/><circle cx="226" cy="427" r="1.5" fill="#222"/><circle cx="233.5" cy="428" r="3" fill="none" stroke="#ccc" stroke-width="1"/><rect x="408.5" y="424.5" width="5.5" height="6" fill="none" stroke="#eee" stroke-width="1.3"/><rect x="416" y="424.5" width="5.5" height="6" fill="none" stroke="#eee" stroke-width="1.1"/><path d="M416.5 430L421 425" stroke="#eee" stroke-width="0.9"/></svg>
<div class="t" style="left:198px;top:423.0px;font-size:6px;color:#ccc;font-style:italic">fx</div>
<div class="t" style="left:60.5px;top:423.0px;font-size:6px;color:#aaa;">#</div>
<div class="t" style="left:78.5px;top:423.0px;font-size:6.3px;color:#c8c8c8;"><i style="width:6px">レ</i><i style="width:6px">イ</i><i style="width:6px">ヤ</i><i style="width:6px">ー</i><i style="width:6px">名</i></div>
<div class="t" style="left:248.5px;top:423.0px;font-size:6.3px;color:#c8c8c8;"><i style="width:6.5px">モ</i><i style="width:6.5px">ー</i><i style="width:6.5px">ド</i></div>
<div class="t" style="left:321px;top:423.0px;font-size:6px;color:#aaa;">T</div>
<div class="t" style="left:330px;top:423.0px;font-size:6.3px;color:#c8c8c8;"><i style="width:5px">ト</i><i style="width:5px">ラ</i><i style="width:5px">ッ</i><i style="width:5px">ク</i><i style="width:5px">マ</i><i style="width:5px">ッ</i><i style="width:5px">ト</i></div>
<div class="t" style="left:427px;top:423.0px;font-size:6.3px;color:#c8c8c8;"><i style="width:5.8px">親</i><i style="width:5.8px">と</i><i style="width:5.8px">リ</i><i style="width:5.8px">ン</i><i style="width:5.8px">ク</i></div>
<div class="a" style="left:2.5px;top:433px;width:495px;height:143px;background:#242424;"></div>
<div class="a" style="left:2.5px;top:432.9px;width:495px;height:10.3px;background:#2b2b2b;"></div>
<div class="a" style="left:2.5px;top:443.09999999999997px;width:495px;height:0.7px;background:#1f1f1f;"></div>
<div class="a" style="left:2.5px;top:482.5px;width:495px;height:10.3px;background:#2b2b2b;"></div>
<div class="a" style="left:2.5px;top:492.7px;width:495px;height:0.7px;background:#1f1f1f;"></div>
<div class="a" style="left:2.5px;top:523.5px;width:495px;height:10.3px;background:#2b2b2b;"></div>
<div class="a" style="left:2.5px;top:533.7px;width:495px;height:0.7px;background:#1f1f1f;"></div>
<div class="a" style="left:2.5px;top:534.0px;width:495px;height:10.3px;background:#2b2b2b;"></div>
<div class="a" style="left:2.5px;top:544.2px;width:495px;height:0.7px;background:#1f1f1f;"></div>
<div class="a" style="left:2.5px;top:544.5px;width:495px;height:10.3px;background:#2b2b2b;"></div>
<div class="a" style="left:2.5px;top:554.7px;width:495px;height:0.7px;background:#1f1f1f;"></div>
<div class="a" style="left:2.5px;top:555.0px;width:495px;height:10.3px;background:#2b2b2b;"></div>
<div class="a" style="left:2.5px;top:565.2px;width:495px;height:0.7px;background:#1f1f1f;"></div>
<div class="a" style="left:2.5px;top:565.5px;width:495px;height:10.3px;background:#2b2b2b;"></div>
<div class="a" style="left:2.5px;top:575.7px;width:495px;height:0.7px;background:#1f1f1f;"></div>
<svg style="left:0;top:0" width="1067" height="600"><path d="M3.5 438Q7 434.5 10.5 438Q7 441.5 3.5 438Z" fill="#ddd"/><circle cx="7" cy="438" r="1.4" fill="#333"/><rect x="20" y="434.4" width="16" height="7.5" fill="#232323"/><rect x="214" y="434.4" width="24" height="7.5" fill="#232323"/><path d="M42.5 436.5L45 439L47.5 436.5" stroke="#999" stroke-width="0.9" fill="none"/><rect x="47.5" y="433.4" width="9.2" height="9.2" fill="#111"/><rect x="48" y="433.9" width="8.2" height="8.2" fill="#e3db62"/><circle cx="80.3" cy="438" r="4.3" fill="#4a1810"/><circle cx="80.3" cy="437.5" r="2.3" fill="#a8442c"/><path d="M79.6 436L81 437.5L79.8 439" stroke="#f0a080" stroke-width="0.9" fill="none"/><circle cx="80.3" cy="440.2" r="0.8" fill="#f4d0c0"/><path d="M172 441Q172.5 434.5 176 434.5Q179.5 434.5 180 441Z" fill="#c8c8c8"/><path d="M172.5 438.5H179.5" stroke="#444" stroke-width="0.7"/><path d="M189 441.5L196.5 434.5" stroke="#d0d0d0" stroke-width="1.2"/><rect x="248.5" y="433.9" width="66" height="8.5" fill="#1a1a1a"/><rect x="318" y="433.9" width="17" height="8.5" fill="#262626"/><rect x="337.5" y="433.9" width="67" height="8.5" fill="#1a1a1a"/><rect x="408" y="433.9" width="17" height="8.5" fill="#262626"/><rect x="437.5" y="433.9" width="48" height="8.5" fill="#1a1a1a"/><path d="M308.5 437L310.5 439L312.5 437" stroke="#aaa" stroke-width="0.9" fill="none"/><path d="M397.8 437L399.8 439L401.8 437" stroke="#aaa" stroke-width="0.9" fill="none"/><path d="M479.5 437L481.5 439L483.5 437" stroke="#aaa" stroke-width="0.9" fill="none"/><circle cx="331.5" cy="438" r="3" fill="none" stroke="#8a8a8a" stroke-width="1"/><path d="M329.7 438H333.3" stroke="#8a8a8a" stroke-width="0.8"/><circle cx="429.5" cy="438" r="3" fill="none" stroke="#8a8a8a" stroke-width="1"/><path d="M427.7 438H431.3" stroke="#8a8a8a" stroke-width="0.8"/><path d="M3.5 487.6Q7 484.1 10.5 487.6Q7 491.1 3.5 487.6Z" fill="#ddd"/><circle cx="7" cy="487.6" r="1.4" fill="#333"/><rect x="20" y="484.0" width="16" height="7.5" fill="#232323"/><rect x="214" y="484.0" width="24" height="7.5" fill="#232323"/><path d="M42.5 486.1L45 488.6L47.5 486.1" stroke="#999" stroke-width="0.9" fill="none"/><rect x="47.5" y="483.0" width="9.2" height="9.2" fill="#111"/><rect x="48" y="483.5" width="8.2" height="8.2" fill="#e7c3d3"/><circle cx="80.3" cy="487.6" r="4.3" fill="#4a1810"/><circle cx="80.3" cy="487.1" r="2.3" fill="#a8442c"/><path d="M79.6 485.6L81 487.1L79.8 488.6" stroke="#f0a080" stroke-width="0.9" fill="none"/><circle cx="80.3" cy="489.8" r="0.8" fill="#f4d0c0"/><path d="M172 490.6Q172.5 484.1 176 484.1Q179.5 484.1 180 490.6Z" fill="#c8c8c8"/><path d="M172.5 488.1H179.5" stroke="#444" stroke-width="0.7"/><path d="M189 491.1L196.5 484.1" stroke="#d0d0d0" stroke-width="1.2"/><rect x="248.5" y="483.5" width="66" height="8.5" fill="#1a1a1a"/><rect x="318" y="483.5" width="17" height="8.5" fill="#262626"/><rect x="337.5" y="483.5" width="67" height="8.5" fill="#1a1a1a"/><rect x="408" y="483.5" width="17" height="8.5" fill="#262626"/><rect x="437.5" y="483.5" width="48" height="8.5" fill="#1a1a1a"/><path d="M308.5 486.6L310.5 488.6L312.5 486.6" stroke="#aaa" stroke-width="0.9" fill="none"/><path d="M397.8 486.6L399.8 488.6L401.8 486.6" stroke="#aaa" stroke-width="0.9" fill="none"/><path d="M479.5 486.6L481.5 488.6L483.5 486.6" stroke="#aaa" stroke-width="0.9" fill="none"/><circle cx="331.5" cy="487.6" r="3" fill="none" stroke="#8a8a8a" stroke-width="1"/><path d="M329.7 487.6H333.3" stroke="#8a8a8a" stroke-width="0.8"/><circle cx="429.5" cy="487.6" r="3" fill="none" stroke="#8a8a8a" stroke-width="1"/><path d="M427.7 487.6H431.3" stroke="#8a8a8a" stroke-width="0.8"/><path d="M3.5 528.6Q7 525.1 10.5 528.6Q7 532.1 3.5 528.6Z" fill="#ddd"/><circle cx="7" cy="528.6" r="1.4" fill="#333"/><rect x="20" y="525.0" width="16" height="7.5" fill="#232323"/><rect x="214" y="525.0" width="24" height="7.5" fill="#232323"/><path d="M43 526.1L45.5 528.6L43 531.1" stroke="#999" stroke-width="0.9" fill="none"/><rect x="47.5" y="524.0" width="9.2" height="9.2" fill="#111"/><rect x="48" y="524.5" width="8.2" height="8.2" fill="#e3db62"/><circle cx="80.3" cy="528.6" r="4.3" fill="#4a1810"/><circle cx="80.3" cy="528.1" r="2.3" fill="#a8442c"/><path d="M79.6 526.6L81 528.1L79.8 529.6" stroke="#f0a080" stroke-width="0.9" fill="none"/><circle cx="80.3" cy="530.8000000000001" r="0.8" fill="#f4d0c0"/><path d="M172 531.6Q172.5 525.1 176 525.1Q179.5 525.1 180 531.6Z" fill="#c8c8c8"/><path d="M172.5 529.1H179.5" stroke="#444" stroke-width="0.7"/><path d="M189 532.1L196.5 525.1" stroke="#d0d0d0" stroke-width="1.2"/><rect x="248.5" y="524.5" width="66" height="8.5" fill="#1a1a1a"/><rect x="318" y="524.5" width="17" height="8.5" fill="#262626"/><rect x="337.5" y="524.5" width="67" height="8.5" fill="#1a1a1a"/><rect x="408" y="524.5" width="17" height="8.5" fill="#262626"/><rect x="437.5" y="524.5" width="48" height="8.5" fill="#1a1a1a"/><path d="M308.5 527.6L310.5 529.6L312.5 527.6" stroke="#aaa" stroke-width="0.9" fill="none"/><path d="M397.8 527.6L399.8 529.6L401.8 527.6" stroke="#aaa" stroke-width="0.9" fill="none"/><path d="M479.5 527.6L481.5 529.6L483.5 527.6" stroke="#aaa" stroke-width="0.9" fill="none"/><circle cx="331.5" cy="528.6" r="3" fill="none" stroke="#8a8a8a" stroke-width="1"/><path d="M329.7 528.6H333.3" stroke="#8a8a8a" stroke-width="0.8"/><circle cx="429.5" cy="528.6" r="3" fill="none" stroke="#8a8a8a" stroke-width="1"/><path d="M427.7 528.6H431.3" stroke="#8a8a8a" stroke-width="0.8"/><path d="M3.5 539.1Q7 535.6 10.5 539.1Q7 542.6 3.5 539.1Z" fill="#ddd"/><circle cx="7" cy="539.1" r="1.4" fill="#333"/><rect x="20" y="535.5" width="16" height="7.5" fill="#232323"/><rect x="214" y="535.5" width="24" height="7.5" fill="#232323"/><path d="M43 536.6L45.5 539.1L43 541.6" stroke="#999" stroke-width="0.9" fill="none"/><rect x="47.5" y="534.5" width="9.2" height="9.2" fill="#111"/><rect x="48" y="535.0" width="8.2" height="8.2" fill="#e7c3d3"/><circle cx="80.3" cy="539.1" r="4.3" fill="#4a1810"/><circle cx="80.3" cy="538.6" r="2.3" fill="#a8442c"/><path d="M79.6 537.1L81 538.6L79.8 540.1" stroke="#f0a080" stroke-width="0.9" fill="none"/><circle cx="80.3" cy="541.3000000000001" r="0.8" fill="#f4d0c0"/><path d="M172 542.1Q172.5 535.6 176 535.6Q179.5 535.6 180 542.1Z" fill="#c8c8c8"/><path d="M172.5 539.6H179.5" stroke="#444" stroke-width="0.7"/><path d="M189 542.6L196.5 535.6" stroke="#d0d0d0" stroke-width="1.2"/><rect x="248.5" y="535.0" width="66" height="8.5" fill="#1a1a1a"/><rect x="318" y="535.0" width="17" height="8.5" fill="#262626"/><rect x="337.5" y="535.0" width="67" height="8.5" fill="#1a1a1a"/><rect x="408" y="535.0" width="17" height="8.5" fill="#262626"/><rect x="437.5" y="535.0" width="48" height="8.5" fill="#1a1a1a"/><path d="M308.5 538.1L310.5 540.1L312.5 538.1" stroke="#aaa" stroke-width="0.9" fill="none"/><path d="M397.8 538.1L399.8 540.1L401.8 538.1" stroke="#aaa" stroke-width="0.9" fill="none"/><path d="M479.5 538.1L481.5 540.1L483.5 538.1" stroke="#aaa" stroke-width="0.9" fill="none"/><circle cx="331.5" cy="539.1" r="3" fill="none" stroke="#8a8a8a" stroke-width="1"/><path d="M329.7 539.1H333.3" stroke="#8a8a8a" stroke-width="0.8"/><circle cx="429.5" cy="539.1" r="3" fill="none" stroke="#8a8a8a" stroke-width="1"/><path d="M427.7 539.1H431.3" stroke="#8a8a8a" stroke-width="0.8"/><path d="M3.5 549.6Q7 546.1 10.5 549.6Q7 553.1 3.5 549.6Z" fill="#ddd"/><circle cx="7" cy="549.6" r="1.4" fill="#333"/><rect x="20" y="546.0" width="16" height="7.5" fill="#232323"/><rect x="214" y="546.0" width="24" height="7.5" fill="#232323"/><path d="M43 547.1L45.5 549.6L43 552.1" stroke="#999" stroke-width="0.9" fill="none"/><rect x="47.5" y="545.0" width="9.2" height="9.2" fill="#111"/><rect x="48" y="545.5" width="8.2" height="8.2" fill="#e3db62"/><circle cx="80.3" cy="549.6" r="4.3" fill="#4a1810"/><circle cx="80.3" cy="549.1" r="2.3" fill="#a8442c"/><path d="M79.6 547.6L81 549.1L79.8 550.6" stroke="#f0a080" stroke-width="0.9" fill="none"/><circle cx="80.3" cy="551.8000000000001" r="0.8" fill="#f4d0c0"/><path d="M172 552.6Q172.5 546.1 176 546.1Q179.5 546.1 180 552.6Z" fill="#c8c8c8"/><path d="M172.5 550.1H179.5" stroke="#444" stroke-width="0.7"/><path d="M189 553.1L196.5 546.1" stroke="#d0d0d0" stroke-width="1.2"/><rect x="248.5" y="545.5" width="66" height="8.5" fill="#1a1a1a"/><rect x="318" y="545.5" width="17" height="8.5" fill="#262626"/><rect x="337.5" y="545.5" width="67" height="8.5" fill="#1a1a1a"/><rect x="408" y="545.5" width="17" height="8.5" fill="#262626"/><rect x="437.5" y="545.5" width="48" height="8.5" fill="#1a1a1a"/><path d="M308.5 548.6L310.5 550.6L312.5 548.6" stroke="#aaa" stroke-width="0.9" fill="none"/><path d="M397.8 548.6L399.8 550.6L401.8 548.6" stroke="#aaa" stroke-width="0.9" fill="none"/><path d="M479.5 548.6L481.5 550.6L483.5 548.6" stroke="#aaa" stroke-width="0.9" fill="none"/><circle cx="331.5" cy="549.6" r="3" fill="none" stroke="#8a8a8a" stroke-width="1"/><path d="M329.7 549.6H333.3" stroke="#8a8a8a" stroke-width="0.8"/><circle cx="429.5" cy="549.6" r="3" fill="none" stroke="#8a8a8a" stroke-width="1"/><path d="M427.7 549.6H431.3" stroke="#8a8a8a" stroke-width="0.8"/><path d="M3.5 560.1Q7 556.6 10.5 560.1Q7 563.6 3.5 560.1Z" fill="#ddd"/><circle cx="7" cy="560.1" r="1.4" fill="#333"/><rect x="20" y="556.5" width="16" height="7.5" fill="#232323"/><rect x="214" y="556.5" width="24" height="7.5" fill="#232323"/><path d="M43 557.6L45.5 560.1L43 562.6" stroke="#999" stroke-width="0.9" fill="none"/><rect x="47.5" y="555.5" width="9.2" height="9.2" fill="#111"/><rect x="48" y="556.0" width="8.2" height="8.2" fill="#e7c3d3"/><circle cx="80.3" cy="560.1" r="4.3" fill="#4a1810"/><circle cx="80.3" cy="559.6" r="2.3" fill="#a8442c"/><path d="M79.6 558.1L81 559.6L79.8 561.1" stroke="#f0a080" stroke-width="0.9" fill="none"/><circle cx="80.3" cy="562.3000000000001" r="0.8" fill="#f4d0c0"/><path d="M172 563.1Q172.5 556.6 176 556.6Q179.5 556.6 180 563.1Z" fill="#c8c8c8"/><path d="M172.5 560.6H179.5" stroke="#444" stroke-width="0.7"/><path d="M189 563.6L196.5 556.6" stroke="#d0d0d0" stroke-width="1.2"/><rect x="248.5" y="556.0" width="66" height="8.5" fill="#1a1a1a"/><rect x="318" y="556.0" width="17" height="8.5" fill="#262626"/><rect x="337.5" y="556.0" width="67" height="8.5" fill="#1a1a1a"/><rect x="408" y="556.0" width="17" height="8.5" fill="#262626"/><rect x="437.5" y="556.0" width="48" height="8.5" fill="#1a1a1a"/><path d="M308.5 559.1L310.5 561.1L312.5 559.1" stroke="#aaa" stroke-width="0.9" fill="none"/><path d="M397.8 559.1L399.8 561.1L401.8 559.1" stroke="#aaa" stroke-width="0.9" fill="none"/><path d="M479.5 559.1L481.5 561.1L483.5 559.1" stroke="#aaa" stroke-width="0.9" fill="none"/><circle cx="331.5" cy="560.1" r="3" fill="none" stroke="#8a8a8a" stroke-width="1"/><path d="M329.7 560.1H333.3" stroke="#8a8a8a" stroke-width="0.8"/><circle cx="429.5" cy="560.1" r="3" fill="none" stroke="#8a8a8a" stroke-width="1"/><path d="M427.7 560.1H431.3" stroke="#8a8a8a" stroke-width="0.8"/><path d="M3.5 570.6Q7 567.1 10.5 570.6Q7 574.1 3.5 570.6Z" fill="#ddd"/><circle cx="7" cy="570.6" r="1.4" fill="#333"/><rect x="20" y="567.0" width="16" height="7.5" fill="#232323"/><rect x="214" y="567.0" width="24" height="7.5" fill="#232323"/><path d="M43 568.1L45.5 570.6L43 573.1" stroke="#999" stroke-width="0.9" fill="none"/><rect x="47.5" y="566.0" width="9.2" height="9.2" fill="#111"/><rect x="48" y="566.5" width="8.2" height="8.2" fill="#c3c3e6"/><circle cx="80.3" cy="570.6" r="4.3" fill="#4a1810"/><circle cx="80.3" cy="570.1" r="2.3" fill="#a8442c"/><path d="M79.6 568.6L81 570.1L79.8 571.6" stroke="#f0a080" stroke-width="0.9" fill="none"/><circle cx="80.3" cy="572.8000000000001" r="0.8" fill="#f4d0c0"/><path d="M172 573.6Q172.5 567.1 176 567.1Q179.5 567.1 180 573.6Z" fill="#c8c8c8"/><path d="M172.5 571.1H179.5" stroke="#444" stroke-width="0.7"/><path d="M189 574.1L196.5 567.1" stroke="#d0d0d0" stroke-width="1.2"/><rect x="248.5" y="566.5" width="66" height="8.5" fill="#1a1a1a"/><rect x="318" y="566.5" width="17" height="8.5" fill="#262626"/><rect x="337.5" y="566.5" width="67" height="8.5" fill="#1a1a1a"/><rect x="408" y="566.5" width="17" height="8.5" fill="#262626"/><rect x="437.5" y="566.5" width="48" height="8.5" fill="#1a1a1a"/><path d="M308.5 569.6L310.5 571.6L312.5 569.6" stroke="#aaa" stroke-width="0.9" fill="none"/><path d="M397.8 569.6L399.8 571.6L401.8 569.6" stroke="#aaa" stroke-width="0.9" fill="none"/><path d="M479.5 569.6L481.5 571.6L483.5 569.6" stroke="#aaa" stroke-width="0.9" fill="none"/><circle cx="331.5" cy="570.6" r="3" fill="none" stroke="#8a8a8a" stroke-width="1"/><path d="M329.7 570.6H333.3" stroke="#8a8a8a" stroke-width="0.8"/><circle cx="429.5" cy="570.6" r="3" fill="none" stroke="#8a8a8a" stroke-width="1"/><path d="M427.7 570.6H431.3" stroke="#8a8a8a" stroke-width="0.8"/><path d="M63 447.0L65.5 449.5L68 447.0" stroke="#999" stroke-width="0.9" fill="none"/><circle cx="75.5" cy="448.5" r="2.8" fill="none" stroke="#c8c8c8" stroke-width="1.1"/><path d="M75.5 444.5V446.0" stroke="#c8c8c8" stroke-width="1"/><path d="M181.5 457.2H187M181.5 459.8H187" stroke="#4a88d8" stroke-width="1.1"/><circle cx="203.8" cy="458.5" r="2.8" fill="none" stroke="#999" stroke-width="0.9"/><path d="M201.5 460.0Q203.8 456.5 206 460.0" stroke="#999" stroke-width="0.8" fill="none"/><circle cx="214" cy="458.5" r="3.2" fill="#e8e8e8"/><circle cx="214" cy="458.5" r="1.2" fill="#333"/><path d="M63 496.7L65.5 499.2L68 496.7" stroke="#999" stroke-width="0.9" fill="none"/><circle cx="75.5" cy="498.2" r="2.8" fill="none" stroke="#4a88d0" stroke-width="1.1"/><path d="M75.5 494.2V495.7" stroke="#4a88d0" stroke-width="1"/><path d="M181.5 507.0H187M181.5 509.6H187" stroke="#4a88d8" stroke-width="1.1"/><circle cx="203.8" cy="508.3" r="2.8" fill="none" stroke="#999" stroke-width="0.9"/><path d="M201.5 509.8Q203.8 506.3 206 509.8" stroke="#999" stroke-width="0.8" fill="none"/><circle cx="214" cy="508.3" r="3.2" fill="#e8e8e8"/><circle cx="214" cy="508.3" r="1.2" fill="#333"/><path d="M5 498.2L9.5 495.5V501Z" fill="#d0d0d0"/><path d="M16.5 494.8L19.8 498.2L16.5 501.6L13.2 498.2Z" fill="#3d8ef0"/><path d="M23.5 495.5L27 498.2L23.5 501" stroke="#777" stroke-width="0.9" fill="none"/><circle cx="434.5" cy="448.5" r="2.5" fill="none" stroke="#8a8a8a" stroke-width="0.9"/><circle cx="434.5" cy="497.8" r="2.5" fill="none" stroke="#8a8a8a" stroke-width="0.9"/></svg>
<div class="t" style="left:60.5px;top:433.0px;font-size:6px;color:#c0c0c0;">1</div>
<div class="t" style="left:88px;top:433.0px;font-size:6.3px;color:#d0d0d0;">hand-r</div>
<div class="t" style="left:250px;top:433.0px;font-size:6.2px;color:#d8d8d8;"><i style="width:6.3px">通</i><i style="width:6.3px">常</i></div>
<div class="t" style="left:340px;top:433.0px;font-size:6.2px;color:#d8d8d8;"><i style="width:5.6px">マ</i><i style="width:5.6px">ッ</i><i style="width:5.6px">ト</i><i style="width:5.6px">な</i><i style="width:5.6px">し</i></div>
<div class="t" style="left:441px;top:433.0px;font-size:5.8px;color:#d8d8d8;">7. body</div>
<div class="t" style="left:60.5px;top:482.6px;font-size:6px;color:#c0c0c0;">2</div>
<div class="t" style="left:88px;top:482.6px;font-size:6.3px;color:#d0d0d0;">hand-l</div>
<div class="t" style="left:250px;top:482.6px;font-size:6.2px;color:#d8d8d8;"><i style="width:6.3px">通</i><i style="width:6.3px">常</i></div>
<div class="t" style="left:340px;top:482.6px;font-size:6.2px;color:#d8d8d8;"><i style="width:5.6px">マ</i><i style="width:5.6px">ッ</i><i style="width:5.6px">ト</i><i style="width:5.6px">な</i><i style="width:5.6px">し</i></div>
<div class="t" style="left:441px;top:482.6px;font-size:5.8px;color:#d8d8d8;">7. body</div>
<div class="t" style="left:60.5px;top:523.6px;font-size:6px;color:#c0c0c0;">3</div>
<div class="t" style="left:88px;top:523.6px;font-size:6.3px;color:#d0d0d0;">btm-r</div>
<div class="t" style="left:250px;top:523.6px;font-size:6.2px;color:#d8d8d8;"><i style="width:6.3px">通</i><i style="width:6.3px">常</i></div>
<div class="t" style="left:340px;top:523.6px;font-size:6.2px;color:#d8d8d8;"><i style="width:5.6px">マ</i><i style="width:5.6px">ッ</i><i style="width:5.6px">ト</i><i style="width:5.6px">な</i><i style="width:5.6px">し</i></div>
<div class="t" style="left:441px;top:523.6px;font-size:5.8px;color:#d8d8d8;">5. up-r</div>
<div class="t" style="left:60.5px;top:534.1px;font-size:6px;color:#c0c0c0;">4</div>
<div class="t" style="left:88px;top:534.1px;font-size:6.3px;color:#d0d0d0;">btm-l</div>
<div class="t" style="left:250px;top:534.1px;font-size:6.2px;color:#d8d8d8;"><i style="width:6.3px">通</i><i style="width:6.3px">常</i></div>
<div class="t" style="left:340px;top:534.1px;font-size:6.2px;color:#d8d8d8;"><i style="width:5.6px">マ</i><i style="width:5.6px">ッ</i><i style="width:5.6px">ト</i><i style="width:5.6px">な</i><i style="width:5.6px">し</i></div>
<div class="t" style="left:441px;top:534.1px;font-size:5.8px;color:#d8d8d8;">6. up-l</div>
<div class="t" style="left:60.5px;top:544.6px;font-size:6px;color:#c0c0c0;">5</div>
<div class="t" style="left:88px;top:544.6px;font-size:6.3px;color:#d0d0d0;">up-r</div>
<div class="t" style="left:250px;top:544.6px;font-size:6.2px;color:#d8d8d8;"><i style="width:6.3px">通</i><i style="width:6.3px">常</i></div>
<div class="t" style="left:340px;top:544.6px;font-size:6.2px;color:#d8d8d8;"><i style="width:5.6px">マ</i><i style="width:5.6px">ッ</i><i style="width:5.6px">ト</i><i style="width:5.6px">な</i><i style="width:5.6px">し</i></div>
<div class="t" style="left:441px;top:544.6px;font-size:5.8px;color:#d8d8d8;">7. body</div>
<div class="t" style="left:60.5px;top:555.1px;font-size:6px;color:#c0c0c0;">6</div>
<div class="t" style="left:88px;top:555.1px;font-size:6.3px;color:#d0d0d0;">up-l</div>
<div class="t" style="left:250px;top:555.1px;font-size:6.2px;color:#d8d8d8;"><i style="width:6.3px">通</i><i style="width:6.3px">常</i></div>
<div class="t" style="left:340px;top:555.1px;font-size:6.2px;color:#d8d8d8;"><i style="width:5.6px">マ</i><i style="width:5.6px">ッ</i><i style="width:5.6px">ト</i><i style="width:5.6px">な</i><i style="width:5.6px">し</i></div>
<div class="t" style="left:441px;top:555.1px;font-size:5.8px;color:#d8d8d8;">7. body</div>
<div class="t" style="left:60.5px;top:565.6px;font-size:6px;color:#c0c0c0;">7</div>
<div class="t" style="left:88px;top:565.6px;font-size:6.3px;color:#d0d0d0;">body</div>
<div class="t" style="left:250px;top:565.6px;font-size:6.2px;color:#d8d8d8;"><i style="width:6.3px">通</i><i style="width:6.3px">常</i></div>
<div class="t" style="left:340px;top:565.6px;font-size:6.2px;color:#d8d8d8;"><i style="width:5.6px">マ</i><i style="width:5.6px">ッ</i><i style="width:5.6px">ト</i><i style="width:5.6px">な</i><i style="width:5.6px">し</i></div>
<div class="t" style="left:441px;top:565.6px;font-size:5.8px;color:#d8d8d8;"><i style="width:6.3px">な</i><i style="width:6.3px">し</i></div>
<div class="t" style="left:82px;top:443.5px;font-size:6.3px;color:#d0d0d0;"><i style="width:6.7px">回</i><i style="width:6.7px">転</i></div>
<div class="t" style="left:81px;top:493.2px;font-size:6.3px;color:#d0d0d0;">bz  <i style="width:6.7px">回</i><i style="width:6.7px">転</i></div>
<div class="t" style="left:172.5px;top:442.6px;font-size:6.2px;color:#a8303c;">0x-89.5<i style="width:4.216px">°</i></div>
<div class="t" style="left:172.5px;top:492.6px;font-size:6.2px;color:#a8303c;">0x+90.1<i style="width:4.216px">°</i></div>
<div class="t" style="left:190.5px;top:453.5px;font-size:6px;color:#c8c8c8;">bz</div>
<div class="t" style="left:190.5px;top:503.3px;font-size:6px;color:#c8c8c8;">bz</div>
<div class="t" style="left:83.6px;top:463.7px;font-size:6.2px;color:#d0d0d0;"><i style="width:5.1px">エ</i><i style="width:5.1px">ク</i><i style="width:5.1px">ス</i><i style="width:5.1px">プ</i><i style="width:5.1px">レ</i><i style="width:5.1px">ッ</i><i style="width:5.1px">シ</i><i style="width:5.1px">ョ</i><i style="width:5.1px">ン</i> : <i style="width:5.1px">回</i><i style="width:5.1px">転</i></div>
<div class="t" style="left:83.6px;top:509.2px;font-size:6.2px;color:#d0d0d0;"><i style="width:5.1px">エ</i><i style="width:5.1px">ク</i><i style="width:5.1px">ス</i><i style="width:5.1px">プ</i><i style="width:5.1px">レ</i><i style="width:5.1px">ッ</i><i style="width:5.1px">シ</i><i style="width:5.1px">ョ</i><i style="width:5.1px">ン</i> : <i style="width:5.1px">回</i><i style="width:5.1px">転</i></div>
<div class="a" style="left:2.5px;top:589px;width:1062px;height:8px;background:#1e1e1e;"></div>
<div class="a" style="left:497px;top:404px;width:5px;height:185px;background:#1b1b1b;"></div>
<div class="a" style="left:502px;top:404px;width:552px;height:185px;background:#232323;"></div>
<div class="a" style="left:502px;top:433px;width:551px;height:156px;background:#343434;"></div>
<div class="a" style="left:502px;top:444px;width:551px;height:10px;background:#383838;"></div>
<div class="a" style="left:502px;top:453.8px;width:551px;height:0.9px;background:#2b2b2b;"></div>
<div class="a" style="left:502px;top:493.5px;width:551px;height:10px;background:#383838;"></div>
<div class="a" style="left:502px;top:503.3px;width:551px;height:0.9px;background:#2b2b2b;"></div>
<svg style="left:0;top:0" width="1067" height="600"><rect x="502" y="406.2" width="551" height="4.3" fill="#6e6e6e"/><rect x="498.5" y="405.5" width="3.5" height="5.5" rx="1.5" fill="#3d8ef0"/><rect x="1051" y="405.5" width="4" height="5.5" rx="1.5" fill="#3d8ef0"/><rect x="502" y="410.5" width="551" height="12" fill="#1d1d1d"/><rect x="529.2" y="419.5" width="0.8" height="1.5" fill="#888"/><rect x="556.7" y="419.5" width="0.8" height="1.5" fill="#888"/><rect x="584.2" y="419.5" width="0.8" height="1.5" fill="#888"/><rect x="611.7" y="419.5" width="0.8" height="1.5" fill="#888"/><rect x="639.2" y="419.5" width="0.8" height="1.5" fill="#888"/><rect x="666.7" y="419.5" width="0.8" height="1.5" fill="#888"/><rect x="694.2" y="419.5" width="0.8" height="1.5" fill="#888"/><rect x="721.7" y="419.5" width="0.8" height="1.5" fill="#888"/><rect x="749.2" y="419.5" width="0.8" height="1.5" fill="#888"/><rect x="776.7" y="419.5" width="0.8" height="1.5" fill="#888"/><rect x="804.2" y="419.5" width="0.8" height="1.5" fill="#888"/><rect x="831.7" y="419.5" width="0.8" height="1.5" fill="#888"/><rect x="859.2" y="419.5" width="0.8" height="1.5" fill="#888"/><rect x="886.7" y="419.5" width="0.8" height="1.5" fill="#888"/><rect x="914.2" y="419.5" width="0.8" height="1.5" fill="#888"/><rect x="941.7" y="419.5" width="0.8" height="1.5" fill="#888"/><rect x="969.2" y="419.5" width="0.8" height="1.5" fill="#888"/><rect x="996.7" y="419.5" width="0.8" height="1.5" fill="#888"/><rect x="1024.2" y="419.5" width="0.8" height="1.5" fill="#888"/><rect x="1051.7" y="419.5" width="0.8" height="1.5" fill="#888"/><rect x="502" y="422.8" width="551" height="7" fill="#6f6f6f"/><rect x="498" y="421.8" width="4" height="9" rx="1.8" fill="#3d8ef0"/><rect x="1051" y="421.8" width="4" height="9" rx="1.8" fill="#3d8ef0"/><rect x="502" y="429.9" width="551" height="3.9" fill="#1f5e24"/><rect x="502" y="430.6" width="551" height="2.4" fill="#3bb043"/><rect x="502" y="433.3" width="551" height="10.1" fill="#1e1e1e"/><rect x="502" y="434.1" width="551" height="8.5" fill="#9d9550"/><rect x="502" y="482.59999999999997" width="551" height="10.6" fill="#1e1e1e"/><rect x="502" y="483.4" width="551" height="9" fill="#9c8890"/><rect x="502" y="523.2" width="551" height="11.299999999999999" fill="#1e1e1e"/><rect x="502" y="524" width="551" height="9.7" fill="#9d9550"/><rect x="502" y="533.8000000000001" width="551" height="11.2" fill="#1e1e1e"/><rect x="502" y="534.6" width="551" height="9.6" fill="#9c8890"/><rect x="502" y="544.2" width="551" height="11.299999999999999" fill="#1e1e1e"/><rect x="502" y="545" width="551" height="9.7" fill="#9d9550"/><rect x="502" y="554.8000000000001" width="551" height="11.4" fill="#1e1e1e"/><rect x="502" y="555.6" width="551" height="9.8" fill="#9c8890"/><rect x="502" y="565.7" width="551" height="10.799999999999999" fill="#1e1e1e"/><rect x="502" y="566.5" width="551" height="9.2" fill="#878aa3"/><rect x="502" y="482.5" width="551" height="0.7" fill="#2a2a2a"/><rect x="502" y="523.2" width="551" height="0.7" fill="#2a2a2a"/><path d="M502.2 495.7L504.5 498L502.2 500.3L499.9 498Z" fill="#e0e0e0"/><path d="M529.6 495.7L531.9 498L529.6 500.3L527.3000000000001 498Z" fill="#e0e0e0"/><path d="M556.5 495.7L558.8 498L556.5 500.3L554.2 498Z" fill="#e0e0e0"/><path d="M555 446H558M556.5 446V451.5M555 451.5H558" stroke="#ddd" stroke-width="1"/><rect x="774.8" y="433.5" width="1.1" height="155.5" fill="#c8302c"/><rect x="556" y="410" width="1.1" height="179" fill="#6a9fe0"/><path d="M552.5 411H560.5V417L556.5 420.5L552.5 417Z" fill="#4a90e8"/><path d="M1058 423.5H1065V428.5L1061.5 431.5L1058 428.5Z" fill="#ddd"/><circle cx="1061.5" cy="438.5" r="3.2" fill="#ccc"/><path d="M1059 438.5L1061.5 436L1064 438.5" fill="#222"/><path d="M499.5 595.5L503 593.5L506 595.5Z" fill="#ddd"/><circle cx="515" cy="594.5" r="2.4" fill="none" stroke="#ccc" stroke-width="1.3"/><rect x="518" y="593.8" width="22" height="1.4" fill="#3a3a3a"/><path d="M545.5 596L548.5 592.5L550.5 594.5L552.5 592.5L555.5 596Z" fill="#ddd"/><rect x="5" y="591.5" width="6" height="5.5" rx="1" fill="#2a62a8"/><rect x="6.5" y="593" width="3" height="2.5" fill="#9cc3f0"/><rect x="16.5" y="591.5" width="6" height="5.5" rx="1.5" fill="#2a62a8"/><circle cx="19.5" cy="594.2" r="1.5" fill="#9cc3f0"/><circle cx="29.5" cy="594.2" r="2.4" fill="none" stroke="#bbb" stroke-width="1.1"/><rect x="37.5" y="592.5" width="5.5" height="3.5" fill="#ccc"/></svg>
<div class="t" style="left:498.4px;top:410.2px;font-size:5.6px;color:#c8c8c8;">0:00f</div>
<div class="t" style="left:521.2px;top:410.2px;font-size:5.6px;color:#c8c8c8;">00:15f</div>
<div class="t" style="left:548.7px;top:410.2px;font-size:5.6px;color:#c8c8c8;">01:00f</div>
<div class="t" style="left:576.2px;top:410.2px;font-size:5.6px;color:#c8c8c8;">01:15f</div>
<div class="t" style="left:603.7px;top:410.2px;font-size:5.6px;color:#c8c8c8;">02:00f</div>
<div class="t" style="left:631.2px;top:410.2px;font-size:5.6px;color:#c8c8c8;">02:15f</div>
<div class="t" style="left:658.7px;top:410.2px;font-size:5.6px;color:#c8c8c8;">03:00f</div>
<div class="t" style="left:686.2px;top:410.2px;font-size:5.6px;color:#c8c8c8;">03:15f</div>
<div class="t" style="left:713.7px;top:410.2px;font-size:5.6px;color:#c8c8c8;">04:00f</div>
<div class="t" style="left:741.2px;top:410.2px;font-size:5.6px;color:#c8c8c8;">04:15f</div>
<div class="t" style="left:768.7px;top:410.2px;font-size:5.6px;color:#c8c8c8;">05:00f</div>
<div class="t" style="left:796.2px;top:410.2px;font-size:5.6px;color:#c8c8c8;">05:15f</div>
<div class="t" style="left:823.7px;top:410.2px;font-size:5.6px;color:#c8c8c8;">06:00f</div>
<div class="t" style="left:851.2px;top:410.2px;font-size:5.6px;color:#c8c8c8;">06:15f</div>
<div class="t" style="left:878.7px;top:410.2px;font-size:5.6px;color:#c8c8c8;">07:00f</div>
<div class="t" style="left:906.2px;top:410.2px;font-size:5.6px;color:#c8c8c8;">07:15f</div>
<div class="t" style="left:933.7px;top:410.2px;font-size:5.6px;color:#c8c8c8;">08:00f</div>
<div class="t" style="left:961.2px;top:410.2px;font-size:5.6px;color:#c8c8c8;">08:15f</div>
<div class="t" style="left:988.7px;top:410.2px;font-size:5.6px;color:#c8c8c8;">09:00f</div>
<div class="t" style="left:1016.2px;top:410.2px;font-size:5.6px;color:#c8c8c8;">09:15f</div>
<div class="t" style="left:1043.7px;top:410.2px;font-size:5.6px;color:#c8c8c8;">10:0</div>
<div class="t" style="left:506px;top:455px;font-family:'Liberation Mono',monospace;font-size:6.75px;color:#cfcfcf">thisComp.layer("hand-l").transform.rotation.valueAtTime(time+0.5)</div>
<div class="t" style="left:506px;top:504.2px;font-family:'Liberation Mono',monospace;font-size:6.75px;color:#cfcfcf">loopOut()</div>
<div class="t" style="left:60px;top:589.0px;font-size:6.2px;color:#c8c8c8;"><i style="width:5.1px">フ</i><i style="width:5.1px">レ</i><i style="width:5.1px">ー</i><i style="width:5.1px">ム</i><i style="width:5.1px">レ</i><i style="width:5.1px">ン</i><i style="width:5.1px">ダ</i><i style="width:5.1px">リ</i><i style="width:5.1px">ン</i><i style="width:5.1px">グ</i><i style="width:5.1px">時</i><i style="width:5.1px">間</i></div>
<div class="t" style="left:128px;top:589.0px;font-size:5.5px;color:#6a6a6a;">12ms</div>
<svg style="left:0;top:0" width="1067" height="600" viewBox="0 0 1067 600">
  <polygon fill="#fff" points="636.8,72 654.3,73.4 666.6,90.1 656.7,121 646.2,123.3 650.6,132.5 652.5,154 656,200 660,244 602,245 604,225 609,160 616,130 621.7,115.2 623.4,111.7 621.1,95.3 625.2,79.6"/>
  <polygon fill="#f6a93b" points="615,131 574.25,154.2 608.3,212.3 620.3,208 621,199.5 618.2,192.4 615.3,189.6 601.2,162.7 626.7,148.5"/>
  <polygon fill="#f6a93b" points="642.5,135 659.4,161.25 685,148.1 696.25,140.6 705,140.6 708.1,143.75 710,152.5 652.5,187.5 630,149.4"/>
  <ellipse cx="630" cy="136" rx="14" ry="10.5" fill="#2aa3dd"/>
  <polygon fill="#8bc43f" points="593,258.5 544.25,268.25 543.5,269.75 533,269 523.25,270.5 526.25,284.75 531.5,321.5 540.5,320 544.25,293 548,290.75 548.75,294.5 594.5,285.5"/>
  <polygon fill="#8bc43f" points="650.8,280 676.1,273.7 691.2,314.9 689.6,317.2 690.4,320.4 718.9,319.6 722.8,328.3 674.6,344.1 672.2,344.1 670.6,326 668.2,324.4"/>
  <circle cx="623" cy="226.3" r="11.5" fill="#2aa3dd"/>
  <polygon fill="#f6a93b" points="622,221.7 589,259 611,279 630,255 650,279 674,263 648,226 634,226"/>
  <circle cx="634.7" cy="226.7" r="13.3" fill="#2aa3dd"/>
  <circle cx="598.2" cy="271.3" r="13.2" fill="#2aa3dd"/>
  <circle cx="662.5" cy="271.2" r="13" fill="#2aa3dd"/>
</svg>
</body></html>
